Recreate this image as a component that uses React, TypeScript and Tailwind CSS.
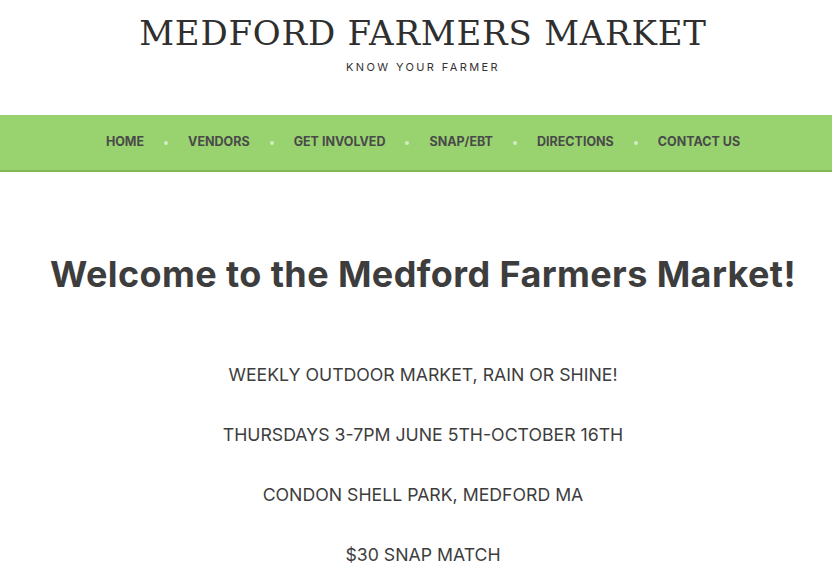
const navItems = ['HOME', 'VENDORS', 'GET INVOLVED', 'SNAP/EBT', 'DIRECTIONS', 'CONTACT US'];

const lines = [
  'WEEKLY OUTDOOR MARKET, RAIN OR SHINE!',
  'THURSDAYS 3-7PM JUNE 5TH-OCTOBER 16TH',
  'CONDON SHELL PARK, MEDFORD MA',
  '$30 SNAP MATCH',
];

const App = () => {
  return (
    <div className="min-h-screen bg-white text-[#3a3a3a] font-['Inter',sans-serif]">
      <header className="flex flex-col items-center pt-[12px] pl-[14px] h-[115px]">
        <h1 className="font-['DejaVu_Serif',serif] text-[34px] leading-[42px] tracking-[0.8px] text-[#2f2f2f]">
          MEDFORD FARMERS MARKET
        </h1>
        <p className="mt-[5px] text-[11px] tracking-[2.4px] text-[#333]">KNOW YOUR FARMER</p>
      </header>

      <nav className="h-[57px] bg-[#99d36f] border-b-[2px] border-[#7fb854] flex items-center justify-center">
        <ul className="flex items-center pl-[14px]">
          {navItems.map((item, i) => (
            <li key={item} className="flex items-center">
              {i > 0 && <span className="mx-[20px] w-[4px] h-[4px] rounded-full bg-[#d4ecc2]" />}
              <a href="#" className="text-[12.5px] font-bold text-[#4a4a4a]">{item}</a>
            </li>
          ))}
        </ul>
      </nav>

      <main className="flex flex-col items-center pt-[80px] pl-[14px]">
        <h2 className="text-[36px] font-bold leading-[44px] text-[#3d3d3d] tracking-[0.4px]">
          Welcome to the Medford Farmers Market!
        </h2>
        <div className="mt-[67px] flex flex-col items-center gap-[36px]">
          {lines.map((l) => (
            <p key={l} className="text-[17.7px] leading-[24px] text-[#3d3d3d]">{l}</p>
          ))}
        </div>
      </main>
    </div>
  );
};

export default App;
